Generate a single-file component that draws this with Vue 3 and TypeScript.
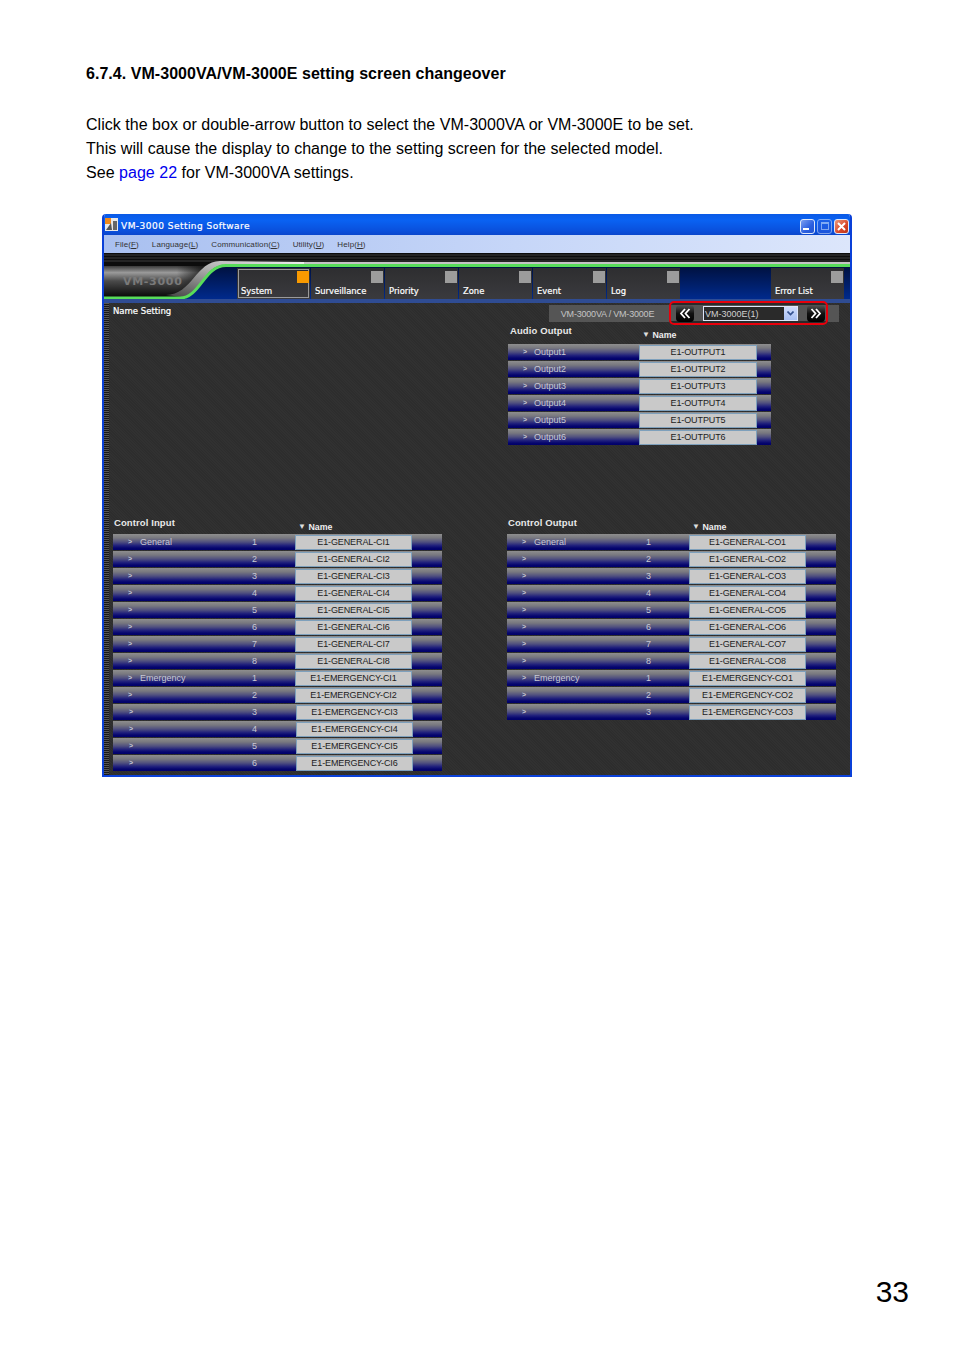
<script setup lang="ts">
interface Row {
  label: string
  num?: string
  name: string
  nudge?: boolean
}

const tabs = [
  { label: 'System', active: true },
  { label: 'Surveillance' },
  { label: 'Priority' },
  { label: 'Zone' },
  { label: 'Event' },
  { label: 'Log' },
]

const menu = [
  ['File(', 'F'],
  ['Language(', 'L'],
  ['Communication(', 'C'],
  ['Utility(', 'U'],
  ['Help(', 'H'],
]

const audio: Row[] = [1, 2, 3, 4, 5, 6].map((n) => ({
  label: `Output${n}`,
  name: `E1-OUTPUT${n}`,
}))

const general = (suffix: string): Row[] =>
  [1, 2, 3, 4, 5, 6, 7, 8].map((n) => ({
    label: n === 1 ? 'General' : '',
    num: String(n),
    name: `E1-GENERAL-${suffix}${n}`,
  }))

const emergency = (suffix: string, count: number, nudgeFrom: number): Row[] =>
  Array.from({ length: count }, (_, i) => ({
    label: i === 0 ? 'Emergency' : '',
    num: String(i + 1),
    name: `E1-EMERGENCY-${suffix}${i + 1}`,
    nudge: i + 1 >= nudgeFrom,
  }))

const inputs: Row[] = [...general('CI'), ...emergency('CI', 6, 3)]
const outputs: Row[] = [...general('CO'), ...emergency('CO', 3, 99)]
</script>

<template>
  <main class="page">
    <h1 class="heading">6.7.4. VM-3000VA/VM-3000E setting screen changeover</h1>
    <p class="para">
      Click the box or double-arrow button to select the VM-3000VA or VM-3000E to be set.<br />
      This will cause the display to change to the setting screen for the selected model.<br />
      See <a class="link" href="#">page 22</a> for VM-3000VA settings.
    </p>

    <section class="window">
      <header class="titlebar">
        <svg class="appicon" width="13" height="13" viewBox="0 0 13 13">
          <rect width="13" height="13" fill="#e8e8e8" />
          <rect width="6" height="6" fill="#f08a1c" />
          <path d="M1 12 L6 5 L7 12 Z" fill="#555" />
          <rect x="8" y="3" width="4" height="9" fill="#666" />
        </svg>
        <span class="title">VM-3000 Setting Software</span>
        <div class="winbtns">
          <span class="winbtn min"><i class="min-bar"></i></span>
          <span class="winbtn max"><i class="max-box"></i></span>
          <span class="winbtn close">
            <svg width="11" height="11" viewBox="0 0 11 11">
              <path d="M2 2 L9 9 M9 2 L2 9" stroke="#fff" stroke-width="2" />
            </svg>
          </span>
        </div>
      </header>

      <nav class="menubar">
        <span v-for="m in menu" :key="m[0]" class="menuitem">{{ m[0] }}<u>{{ m[1] }}</u>)</span>
      </nav>

      <div class="head">
        <svg class="headart" width="746" height="50" viewBox="0 0 746 50">
          <defs>
            <linearGradient id="logoFill" x1="0" y1="0" x2="0" y2="1">
              <stop offset="0" stop-color="#3a3a3a" />
              <stop offset="0.22" stop-color="#9a9a9a" />
              <stop offset="0.5" stop-color="#4a4a4a" />
              <stop offset="1" stop-color="#0c0c0c" />
            </linearGradient>
            <linearGradient id="logoFade" x1="0" y1="0" x2="1" y2="0">
              <stop offset="0.7" stop-color="#111" stop-opacity="0" />
              <stop offset="1" stop-color="#111" stop-opacity="1" />
            </linearGradient>
            <linearGradient id="swoosh" x1="0" y1="1" x2="1" y2="0">
              <stop offset="0" stop-color="#444" />
              <stop offset="0.55" stop-color="#b0b0b0" />
              <stop offset="1" stop-color="#f0f0f0" />
            </linearGradient>
            <linearGradient id="navy" x1="0" y1="0" x2="0" y2="1">
              <stop offset="0" stop-color="#00103c" />
              <stop offset="1" stop-color="#002a8c" />
            </linearGradient>
          </defs>
          <rect width="746" height="50" fill="#0c0c0c" />
          <path d="M0 2H746M0 5H746M0 8H746" stroke="#3c3c3c" stroke-width="1" />
          <rect y="13" width="104" height="30" fill="url(#logoFill)" />
          <rect y="13" width="104" height="30" fill="url(#logoFade)" />
          <path d="M78 46 C96 46 100 12 120 12 L746 12 L746 46 Z" fill="url(#navy)" />
          <path d="M62 42 C88 42 92 8 116 8 L200 9 L200 12 L120 12 C100 12 96 44 78 44 Z" fill="url(#swoosh)" />
          <path d="M200 9 H746 V11 H200 Z" fill="#c4c4c4" />
          <path d="M0 45 L76 45 C96 45 100 12.5 122 12.5 L746 12.5" fill="none" stroke="#58dc5a" stroke-width="3" />
          <rect y="46" width="746" height="4" fill="#2f4c93" />
        </svg>
        <div class="headrow">
          <span class="logo">VM-3000</span>
          <div class="tabs">
            <div v-for="t in tabs" :key="t.label" class="tab" :class="{ active: t.active }">
              <i class="tabmark"></i>
              <span class="tablabel">{{ t.label }}</span>
            </div>
          </div>
          <div class="tab errtab">
            <i class="tabmark"></i>
            <span class="tablabel">Error List</span>
          </div>
        </div>
      </div>

      <div class="content">
        <div class="rail"></div>
        <div class="body">
          <div class="toolbar">
            <span class="pagename">Name Setting</span>
            <div class="modelpick">
              <span class="modelcap">VM-3000VA / VM-3000E</span>
              <div class="redbox">
                <button class="arrowbtn" type="button" aria-label="Previous">
                  <svg width="12" height="11" viewBox="0 0 12 11">
                    <path d="M6 1 L2 5.5 L6 10 M10.5 1 L6.5 5.5 L10.5 10" fill="none" stroke="#fff" stroke-width="1.8" />
                  </svg>
                </button>
                <div class="combo">
                  <span class="combotext">VM-3000E(1)</span>
                  <span class="combobtn">
                    <svg width="7" height="5" viewBox="0 0 7 5">
                      <path d="M0.5 0.5 L3.5 3.5 L6.5 0.5" fill="none" stroke="#33518f" stroke-width="1.6" />
                    </svg>
                  </span>
                </div>
                <button class="arrowbtn" type="button" aria-label="Next">
                  <svg width="12" height="11" viewBox="0 0 12 11">
                    <path d="M1.5 1 L5.5 5.5 L1.5 10 M6 1 L10 5.5 L6 10" fill="none" stroke="#fff" stroke-width="1.8" />
                  </svg>
                </button>
              </div>
              <span class="modelend"></span>
            </div>
          </div>

          <div class="upper">
            <section class="panel audio">
              <div class="panelhead">
                <span class="paneltitle">Audio Output</span>
                <span class="namecap"><i class="tri">▼</i>Name</span>
              </div>
              <div v-for="r in audio" :key="r.name" class="row">
                <span class="chev">&gt;</span>
                <span class="rowlabel">{{ r.label }}</span>
                <span class="namebox">{{ r.name }}</span>
              </div>
            </section>
          </div>

          <div class="lower">
            <section class="panel ctrl ctrl-in">
              <div class="panelhead">
                <span class="paneltitle">Control Input</span>
                <span class="namecap"><i class="tri">▼</i>Name</span>
              </div>
              <div v-for="r in inputs" :key="r.name" class="row" :class="{ nudge: r.nudge }">
                <span class="chev">&gt;</span>
                <span class="rowlabel">{{ r.label }}</span>
                <span class="rownum">{{ r.num }}</span>
                <span class="namebox">{{ r.name }}</span>
              </div>
            </section>
            <section class="panel ctrl">
              <div class="panelhead">
                <span class="paneltitle">Control Output</span>
                <span class="namecap"><i class="tri">▼</i>Name</span>
              </div>
              <div v-for="r in outputs" :key="r.name" class="row">
                <span class="chev">&gt;</span>
                <span class="rowlabel">{{ r.label }}</span>
                <span class="rownum">{{ r.num }}</span>
                <span class="namebox">{{ r.name }}</span>
              </div>
            </section>
          </div>
        </div>
      </div>
    </section>

    <div class="pagenum">33</div>
  </main>
</template>

<style>
html,
body {
  margin: 0;
  background: #fff;
}
</style>

<style scoped>
.page {
  box-sizing: border-box;
  width: 954px;
  height: 1351px;
  padding: 62px 0 0 86px;
  display: flex;
  flex-direction: column;
  font-family: 'Liberation Sans', Arial, sans-serif;
  color: #000;
  background: #fff;
}
.heading {
  margin: 0;
  font-size: 16px;
  line-height: 24px;
  font-weight: 700;
  letter-spacing: 0.04px;
}
.para {
  margin: 27px 0 0;
  font-size: 16px;
  line-height: 24px;
  letter-spacing: 0.03px;
}
.link {
  color: #0000ee;
  text-decoration: none;
}

.window {
  box-sizing: border-box;
  width: 750px;
  height: 563px;
  margin: 29px 0 0 16px;
  display: flex;
  flex-direction: column;
  border: 2px solid #0a40d8;
  border-top: 0;
  border-radius: 4px 4px 0 0;
  font-family: 'DejaVu Sans', sans-serif;
  overflow: hidden;
}
.titlebar {
  height: 21px;
  flex: none;
  display: flex;
  align-items: center;
  gap: 3px;
  padding-left: 1px;
  background: linear-gradient(#0a5ae6, #0a62f2 30%, #0a50dc 80%, #0a46cc);
}
.appicon {
  flex: none;
}
.title {
  color: #fff;
  font-size: 9px;
  line-height: 11px;
  padding-top: 4px;
  font-weight: 400;
  letter-spacing: 0.47px;
  white-space: nowrap;
  -webkit-text-stroke: 0.2px #fff;
}
.winbtns {
  margin-left: auto;
  display: flex;
  gap: 2px;
  padding-right: 1px;
  padding-top: 3px;
}
.winbtn {
  box-sizing: border-box;
  width: 15px;
  height: 15px;
  display: flex;
  align-items: center;
  justify-content: center;
  position: relative;
  border: 1px solid #dfe8fb;
  border-radius: 3px;
  background: linear-gradient(135deg, #7d9ff0, #2a5ee0 60%, #2254d0);
}
.winbtn.max {
  opacity: 0.55;
  background: #2a5ee0;
}
.winbtn.close {
  background: linear-gradient(135deg, #ec9a7c, #d8482a 60%, #b83218);
}
.min-bar {
  display: block;
  width: 6px;
  height: 2px;
  margin-top: 6px;
  margin-right: 3px;
  background: #fff;
}
.max-box {
  display: block;
  width: 8px;
  height: 8px;
  box-sizing: border-box;
  border: 1px solid #dfe8fb;
  border-top-width: 2px;
}
.menubar {
  height: 18px;
  flex: none;
  box-sizing: border-box;
  display: flex;
  align-items: center;
  gap: 13px;
  padding-left: 11px;
  background: linear-gradient(90deg, #a9c0f0, #c6d6f8 55%, #dce6fb);
  font-family: 'Liberation Sans', sans-serif;
  font-size: 8px;
  letter-spacing: 0.1px;
  color: #333;
}
.menuitem {
  white-space: nowrap;
}

.head {
  position: relative;
  height: 50px;
  flex: none;
}
.headart {
  position: absolute;
  inset: 0;
}
.headrow {
  position: relative;
  display: flex;
  height: 46px;
  box-sizing: border-box;
  padding-top: 15px;
}
.logo {
  width: 133px;
  flex: none;
  box-sizing: border-box;
  padding: 7px 0 0 19px;
  font-family: 'DejaVu Sans', sans-serif;
  font-weight: 700;
  font-size: 11px;
  letter-spacing: 0.7px;
  line-height: 14px;
  color: #7a7a7a;
}
.tabs {
  display: flex;
  gap: 1px;
  margin-left: 0;
}
.tab {
  position: relative;
  box-sizing: border-box;
  width: 73px;
  height: 31px;
  display: flex;
  align-items: flex-end;
  padding: 0 0 2px 4px;
  background: linear-gradient(#2e2e30, #3a3a3e);
}
.tab.active {
  outline: 1px solid #9a9a9a;
  outline-offset: -2px;
}
.tabmark {
  position: absolute;
  top: 3px;
  right: 1px;
  width: 12px;
  height: 12px;
  background: #9c9c9c;
}
.tab.active .tabmark {
  background: #f99a00;
}
.tablabel {
  color: #fff;
  font-size: 8.4px;
  line-height: 11px;
  white-space: nowrap;
  -webkit-text-stroke: 0.2px #fff;
}
.errtab {
  margin-left: 91px;
}

.content {
  flex: 1;
  min-height: 0;
  display: flex;
  background: repeating-linear-gradient(45deg, #2d2d2d 0 1px, #313131 1px 2px);
}
.rail {
  width: 5px;
  flex: none;
  background: repeating-linear-gradient(#555 0 1px, #181818 1px 2px);
}
.body {
  flex: 1;
  min-width: 0;
}
.toolbar {
  position: relative;
  display: flex;
  align-items: center;
  height: 24px;
  margin-top: -2px;
  padding-right: 11px;
}
.pagename {
  margin-left: 4px;
  padding-bottom: 4px;
  font-size: 8.5px;
  color: #fff;
  -webkit-text-stroke: 0.2px #fff;
}
.modelpick {
  margin-left: auto;
  display: flex;
  align-items: center;
}
.modelcap {
  width: 120px;
  height: 17px;
  box-sizing: border-box;
  display: flex;
  align-items: center;
  justify-content: center;
  padding: 1px 3px 0 0;
  background: #555;
  color: #c4c4c4;
  font-family: 'Liberation Sans', sans-serif;
  font-size: 9px;
  letter-spacing: -0.2px;
  white-space: nowrap;
}
.redbox {
  box-sizing: border-box;
  width: 159px;
  height: 24px;
  display: flex;
  align-items: center;
  gap: 9px;
  padding: 0 1px 0 5px;
  border: 2px solid #e8000c;
  border-radius: 5px;
  background: linear-gradient(#2a2a2a 0 2px, #555 2px calc(100% - 2px), #2a2a2a calc(100% - 2px));
}
.modelend {
  width: 11px;
  height: 17px;
  background: #555;
}
.arrowbtn {
  flex: none;
  width: 18px;
  height: 17px;
  padding: 0;
  display: flex;
  align-items: center;
  justify-content: center;
  border: 0;
  border-radius: 4px;
  background: linear-gradient(#555, #111 50%, #000);
}
.combo {
  flex: 1;
  min-width: 0;
  height: 15px;
  box-sizing: border-box;
  display: flex;
  border: 1px solid #dfe6f8;
  background: #2a2a2a;
}
.combotext {
  flex: 1;
  padding: 1px 0 0 1px;
  color: #d0d0d0;
  font-family: 'Liberation Sans', sans-serif;
  font-size: 9px;
  line-height: 12px;
  white-space: nowrap;
}
.combobtn {
  width: 13px;
  display: flex;
  align-items: center;
  justify-content: center;
  background: linear-gradient(#cfdcfb, #a8c0f4);
}

.upper {
  height: 192px;
  padding-left: 399px;
}
.lower {
  display: grid;
  grid-template-columns: 398px 1fr;
}
.ctrl-in {
  padding-left: 4px;
}
.panel {
  font-family: 'Liberation Sans', sans-serif;
}
.panelhead {
  display: flex;
  height: 17px;
  align-items: flex-start;
}
.audio .panelhead {
  height: 19px;
}
.paneltitle {
  box-sizing: border-box;
  flex: none;
  padding-left: 1px;
  font-size: 9.5px;
  line-height: 12px;
  letter-spacing: 0.1px;
  color: #e8e8e8;
  font-weight: 700;
}
.ctrl .paneltitle {
  width: 185px;
}
.audio .paneltitle {
  width: 134px;
  padding-left: 2px;
}
.namecap {
  margin-top: 4px;
  display: flex;
  align-items: center;
  color: #eee;
  font-size: 8.8px;
  line-height: 12px;
  font-weight: 700;
}
.tri {
  width: 10.5px;
  font-style: normal;
  font-weight: 400;
  font-size: 8px;
  color: #ddd;
}
.row {
  position: relative;
  box-sizing: border-box;
  display: grid;
  align-items: center;
  height: 16px;
  margin-bottom: 1px;
  color: #c8c8d4;
  font-size: 9px;
  letter-spacing: 0;
  background: linear-gradient(#8e8e8e, #78787f 25%, #50507f 50%, #20207c 72%, #05056e 88%, #00006a);
}
.ctrl .row {
  width: 329px;
  grid-template-columns: 27px 112px 43px 117px 1fr;
}
.audio .row {
  width: 263px;
  grid-template-columns: 26px 105px 118px 1fr;
}
.ctrl .row.nudge {
  grid-template-columns: 28px 111px 43px 1px 117px 1fr;
}
.row.nudge .namebox {
  grid-column: 5;
}
.chev {
  padding-left: 15px;
  font-size: 7px;
  font-weight: 700;
  line-height: 16px;
}
.row.nudge .chev {
  padding-left: 16px;
}
.rowlabel {
  white-space: nowrap;
}
.rownum {
  font-size: 9px;
}
.namebox {
  box-sizing: border-box;
  height: 15px;
  display: flex;
  align-items: center;
  justify-content: center;
  background: #c9c9c9;
  border: 1px solid #7ea0bc;
  color: #1c1c1c;
  font-size: 9px;
  letter-spacing: -0.12px;
  white-space: nowrap;
}

.pagenum {
  margin: auto 45px 42px auto;
  font-size: 30px;
  line-height: 34px;
}
</style>
